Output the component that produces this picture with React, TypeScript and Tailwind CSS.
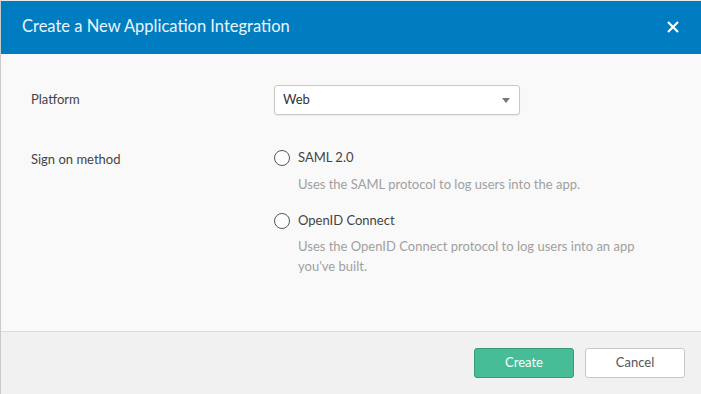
import React from "react";

export default function App() {
  const font = { fontFamily: "Lato, 'Open Sans', sans-serif" };
  return (
    <div className="w-[701px] h-[394px] bg-[#e9e9e9] pt-px overflow-hidden" style={font}>
      <div className="h-[393px] flex flex-col border-l border-[#c9c9c9] bg-[#f9f9f9]">
        <div className="h-[53px] bg-[#007dc1] flex items-center justify-between pl-[21px] pr-[22px]">
          <h1 className="text-[16.5px] text-[#eef4fa] leading-none pb-[2px]">Create a New Application Integration</h1>
          <svg width="12" height="12" viewBox="0 0 12 12" className="mb-[1px]">
            <path d="M1 1L11 11M11 1L1 11" stroke="#ffffff" strokeWidth="2.2" />
          </svg>
        </div>
        <div className="flex-1 bg-[#f9f9f9] pl-[30px] pt-[31px] text-[13px]">
          <div className="flex items-center">
            <div className="w-[243px] text-[#444]">Platform</div>
            <div className="w-[246px] h-[30px] bg-white border border-[#c8c8c8] rounded-[3px] flex items-center justify-between pl-[8px] pr-[9px] shadow-[0_1px_1px_rgba(0,0,0,0.06)]">
              <span className="text-[#333]">Web</span>
              <svg width="8" height="5" viewBox="0 0 8 5">
                <path d="M0 0H8L4 5Z" fill="#777" />
              </svg>
            </div>
          </div>
          <div className="flex mt-[30px]">
            <div className="w-[243px] text-[#444] pt-[5px]">Sign on method</div>
            <div className="flex flex-col gap-[14px]">
              <div>
                <div className="flex items-center gap-[8px] h-[26px]">
                  <span className="w-[16px] h-[16px] rounded-full border border-[#555] bg-white" />
                  <span className="text-[#444]">SAML 2.0</span>
                </div>
                <div className="pl-[24px] text-[#a0a0a0] leading-[20px] mt-[3px]">
                  Uses the SAML protocol to log users into the app.
                </div>
              </div>
              <div>
                <div className="flex items-center gap-[8px] h-[26px]">
                  <span className="w-[16px] h-[16px] rounded-full border border-[#555] bg-white" />
                  <span className="text-[#444]">OpenID Connect</span>
                </div>
                <div className="pl-[24px] text-[#a0a0a0] leading-[20px] mt-[2px] w-[370px]">
                  Uses the OpenID Connect protocol to log users into an app you've built.
                </div>
              </div>
            </div>
          </div>
        </div>
        <div className="h-[63px] bg-[#f1f1f1] border-t border-[#dcdcdc] flex items-start justify-end gap-[11px] pr-[16px] pt-[16px] text-[13px]">
          <button className="w-[100px] h-[30px] rounded-[3px] bg-[#46bd96] border border-[#359b79] text-white">Create</button>
          <button className="w-[100px] h-[30px] rounded-[3px] bg-white border border-[#c8c8c8] text-[#555]">Cancel</button>
        </div>
      </div>
    </div>
  );
}
